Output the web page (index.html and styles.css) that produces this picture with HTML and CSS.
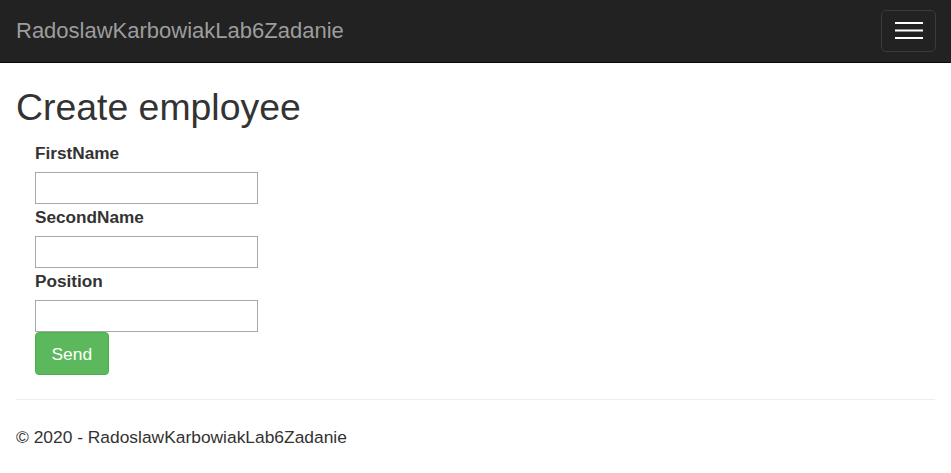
FILE: index.html
```html
<!DOCTYPE html>
<html lang="en">
<head>
<meta charset="utf-8">
<title>Create employee</title>
<link rel="stylesheet" href="styles.css">
</head>
<body>
<nav class="navbar">
  <a class="brand" href="#">RadoslawKarbowiakLab6Zadanie</a>
  <button class="toggler" type="button" aria-label="Toggle navigation">
    <svg width="28" height="18" viewBox="0 0 28 18" aria-hidden="true">
      <rect x="0" y="0" width="28" height="2" fill="#ffffff"/>
      <rect x="0" y="7.5" width="28" height="2" fill="#ffffff"/>
      <rect x="0" y="15" width="28" height="2" fill="#ffffff"/>
    </svg>
  </button>
</nav>
<main class="container">
  <h1 class="title">Create employee</h1>
  <form class="form">
    <div class="group">
      <label class="label" for="fn">FirstName</label>
      <input class="input" id="fn" type="text">
    </div>
    <div class="group">
      <label class="label" for="sn">SecondName</label>
      <input class="input" id="sn" type="text">
    </div>
    <div class="group last">
      <label class="label" for="pos">Position</label>
      <input class="input" id="pos" type="text">
    </div>
    <button class="btn-send" type="submit">Send</button>
  </form>
  <hr class="rule">
  <footer class="footer">© 2020 - RadoslawKarbowiakLab6Zadanie</footer>
</main>
</body>
</html>
```
FILE: styles.css
```css
* { box-sizing: border-box; }
html, body { margin: 0; padding: 0; }
body {
  font-family: "Liberation Sans", Arial, sans-serif;
  font-size: 17.4px;
  color: #333;
  background: #fff;
}
.navbar {
  height: 63px;
  background: #222;
  border-bottom: 1px solid #080808;
  display: flex;
  align-items: center;
  justify-content: space-between;
  padding: 0 15px 0 16px;
}
.brand {
  font-size: 22px;
  color: #9d9d9d;
  text-decoration: none;
  line-height: 62px;
}
.toggler {
  width: 55px;
  height: 42px;
  margin-top: -1px;
  background: transparent;
  border: 1px solid #3a3a3a;
  border-radius: 5px;
  padding: 0;
  display: flex;
  align-items: center;
  justify-content: center;
}
.toggler svg { display: block; margin-top: 1px; }
.container {
  padding: 0 16px;
}
.title {
  font-size: 37.4px;
  font-weight: 400;
  line-height: 1.1;
  margin: 24px 0 13px;
  color: #333;
}
.form {
  margin-left: 19px;
  display: flex;
  flex-direction: column;
  align-items: flex-start;
}
.group {
  display: flex;
  flex-direction: column;
  align-items: flex-start;
  margin-bottom: 1px;
}
.group.last { margin-bottom: 0; }
.label {
  font-weight: 700;
  font-size: 17.2px;
  line-height: 24px;
  margin-bottom: 7px;
  color: #333;
}
.input {
  width: 223px;
  height: 32px;
  border: 1px solid #a9a9a9;
  border-radius: 0;
  padding: 1px 2px;
  font: inherit;
  background: #fff;
}
.btn-send {
  font-family: inherit;
  font-size: 17.4px;
  line-height: 26px;
  padding: 7.5px 15.5px;
  color: #fff;
  background: #5cb85c;
  border: 1px solid #4cae4c;
  border-radius: 4px;
}
.rule {
  margin: 24px 0 0;
  border: 0;
  border-top: 1px solid #eee;
  height: 0;
}
.footer {
  margin-top: 23.5px;
  line-height: 26px;
  color: #333;
}
```
